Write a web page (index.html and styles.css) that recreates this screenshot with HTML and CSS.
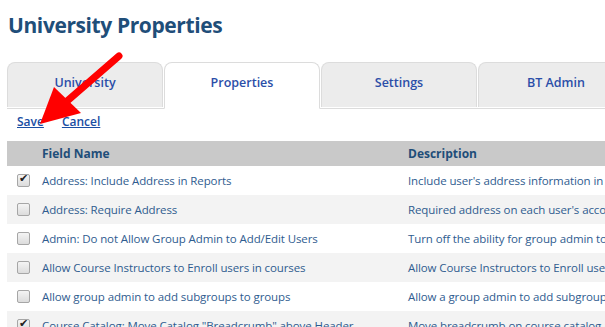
FILE: index.html
```html
<!DOCTYPE html>
<html lang="en">
<head>
  <meta charset="UTF-8" />
  <title>University Properties</title>
  <link rel="stylesheet" href="styles.css">
</head>
<body>
  <h1 class="page-title">University Properties</h1>

  <!-- tabs -->
  <div class="tabs">
    <div class="tab">University</div>
    <div class="tab active">Properties</div>
    <div class="tab">Settings</div>
    <div class="tab">BT Admin</div>
  </div>

  <div class="actions">
    <a href="#" class="save">Save</a>
    <a href="#">Cancel</a>
  </div>

  <div class="table-wrap">
    <table class="props">
      <thead>
        <tr>
          <th class="col-check"></th>
          <th class="col-name">Field Name</th>
          <th>Description</th>
        </tr>
      </thead>
      <tbody>
        <tr>
          <td class="col-check"><span class="box checked"></span></td>
          <td>Address: Include Address in Reports</td>
          <td>Include user's address information in reports</td>
        </tr>
        <tr>
          <td class="col-check"><span class="box"></span></td>
          <td>Address: Require Address</td>
          <td>Required address on each user's account</td>
        </tr>
        <tr>
          <td class="col-check"><span class="box"></span></td>
          <td>Admin: Do not Allow Group Admin to Add/Edit Users</td>
          <td>Turn off the ability for group admin to add or edit users</td>
        </tr>
        <tr>
          <td class="col-check"><span class="box"></span></td>
          <td>Allow Course Instructors to Enroll users in courses</td>
          <td>Allow Course Instructors to Enroll users in courses</td>
        </tr>
        <tr>
          <td class="col-check"><span class="box"></span></td>
          <td>Allow group admin to add subgroups to groups</td>
          <td>Allow a group admin to add subgroups to groups</td>
        </tr>
        <tr>
          <td class="col-check"><span class="box checked"></span></td>
          <td>Course Catalog: Move Catalog "Breadcrumb" above Header</td>
          <td>Move breadcrumb on course catalog above header</td>
        </tr>
      </tbody>
    </table>
  </div>

  <!-- red pointer arrow -->
  <svg class="pointer" width="130" height="80" viewBox="0 0 130 80">
    <line x1="119" y1="4" x2="66" y2="50" stroke="#ff0000" stroke-width="7" stroke-linecap="round" />
    <polygon points="40,72 54,35 81,61" fill="#ff0000" />
  </svg>
</body>
</html>
```

FILE: styles.css
```css
body {
  margin: 0;
  padding: 0 0 0 7px;
  font-family: "Open Sans", Arial, sans-serif;
  overflow: hidden;
  position: relative;
  background: #fff;
  height: 327px;
}

.page-title {
  margin: 0;
  padding: 11px 0 0 1px;
  height: 52px;
  box-sizing: border-box;
  font-size: 21px;
  font-weight: bold;
  color: #1f4e79;
  letter-spacing: -0.4px;
}

.tabs {
  display: flex;
  gap: 1px;
  width: 700px;
  border-bottom: 1px solid #dcdcdc;
  margin-top: 10px;
}

.tab {
  width: 154px;
  height: 44px;
  line-height: 40px;
  text-align: center;
  background: #ececec;
  border: 1px solid #dcdcdc;
  border-bottom: none;
  border-radius: 8px 8px 0 0;
  font-size: 12.5px;
  font-weight: 600;
  color: #2b4ea8;
  margin-bottom: -1px;
}

.tab.active {
  background: #fff;
  border-bottom: 1px solid #fff;
  height: 45px;
}

.actions {
  height: 32px;
  box-sizing: border-box;
  display: flex;
  align-items: flex-start;
  gap: 18px;
  padding: 4px 0 0 10px;
  font-size: 12px;
  font-weight: 600;
}

.actions a {
  color: #1a4ea3;
  text-decoration: underline;
}

.table-wrap {
  width: 598px;
  overflow: hidden;
}

.props {
  border-collapse: collapse;
  width: 900px;
  font-size: 11.5px;
  letter-spacing: -0.1px;
  color: #2f5c8f;
}

.props th {
  background: #c9c9c9;
  height: 25px;
  padding: 0;
  text-align: left;
  font-weight: bold;
  color: #1f4e79;
  font-size: 12px;
  letter-spacing: 0;
}

.props td {
  height: 29px;
  padding: 0;
  white-space: nowrap;
}

.props tbody tr:nth-child(even) {
  background: #f3f3f3;
}

.col-check {
  width: 35px;
}

.props td.col-check {
  padding-left: 10px;
  width: 25px;
}

.col-name {
  width: 366px;
}

.box {
  display: block;
  width: 11px;
  height: 11px;
  border: 1px solid #a6a6a6;
  border-radius: 2px;
  background: linear-gradient(#f4f4f4, #dcdcdc);
  position: relative;
}

.box.checked::after {
  content: "\2714";
  position: absolute;
  left: 1px;
  top: -3px;
  font-size: 11px;
  color: #222;
  font-family: "DejaVu Sans", sans-serif;
}

.pointer {
  position: absolute;
  left: 0;
  top: 52px;
}
```
